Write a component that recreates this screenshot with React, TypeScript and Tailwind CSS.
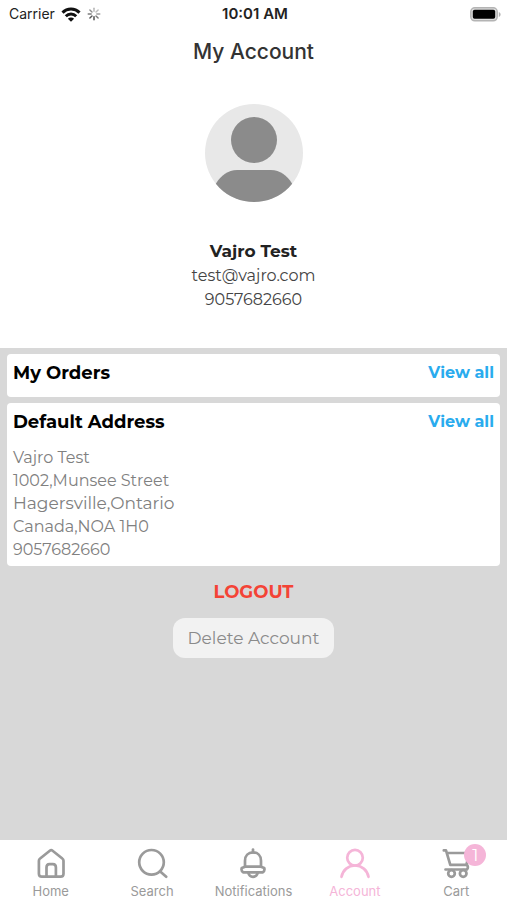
import type { ReactNode } from "react";

function WifiIcon() {
  return (
    <svg viewBox="0 0 20 15" className="h-[15px] w-5" fill="none" stroke="#111" strokeWidth="3" aria-hidden="true">
      <path d="M1.500 5.600a12 12 0 0 1 17 0" />
      <path d="M4.800 9.200a7.400 7.400 0 0 1 10.400 0" />
      <path d="M10 14.800 6.900 11.700a4.400 4.400 0 0 1 6.200 0Z" fill="#111" stroke="none" />
    </svg>
  );
}

function SpinnerIcon() {
  return (
    <svg viewBox="0 0 14 14" className="size-3.5" stroke="#444" strokeWidth="1.400" strokeLinecap="round" aria-hidden="true">
      <path d="M7 1.200v3" opacity=".4" />
      <path d="m11.100 2.900-2.100 2.100" opacity=".35" />
      <path d="M12.800 7h-3" opacity=".5" />
      <path d="m11.100 11.100-2.100-2.100" opacity=".7" />
      <path d="M7 12.800v-3" />
      <path d="m2.900 11.100 2.100-2.100" opacity=".9" />
      <path d="M1.200 7h3" opacity=".7" />
      <path d="m2.900 2.900 2.100 2.100" opacity=".6" />
    </svg>
  );
}

function BatteryIcon() {
  return (
    <svg viewBox="0 0 31 15" className="h-[15px] w-[31px]" aria-hidden="true">
      <rect x=".8" y=".8" width="26.400" height="13" rx="4" fill="#ddd" stroke="#b4b4b4" strokeWidth="1.500" />
      <rect x="2.800" y="2.800" width="22.400" height="9" rx="1.800" fill="#000" />
      <path d="M28.800 5v5c1.100-.4 1.800-1.400 1.800-2.500S29.900 5.400 28.800 5Z" fill="#b4b4b4" />
    </svg>
  );
}

function Avatar() {
  return (
    <svg viewBox="0 0 98 98" className="size-[98px]" role="img" aria-label="Profile picture">
      <defs>
        <clipPath id="avatar-disc">
          <circle cx="49" cy="49" r="49" />
        </clipPath>
      </defs>
      <circle cx="49" cy="49" r="49" fill="#e8e8e8" />
      <circle cx="49" cy="36" r="23" fill="#8b8b8b" />
      <path
        d="M32 66h34c9 0 16 5.500 21 13.500v20H11v-20c5-8 12-13.500 21-13.500Z"
        fill="#8b8b8b"
        clipPath="url(#avatar-disc)"
      />
    </svg>
  );
}

function Glyph({ children }: { children: ReactNode }) {
  return (
    <svg
      viewBox="0 0 32 32"
      className="size-8"
      fill="none"
      stroke="currentColor"
      strokeWidth="2.700"
      strokeLinecap="round"
      strokeLinejoin="round"
      aria-hidden="true"
    >
      {children}
    </svg>
  );
}

function HomeIcon() {
  return (
    <Glyph>
      <path d="M3.900 12.800c0-1 .4-1.700 1.200-2.300l9.700-7.800c.9-.7 1.900-.7 2.800 0l9.700 7.800c.8.6 1.200 1.300 1.200 2.300v12.900c0 1.900-1 2.900-2.900 2.900H6.800c-1.900 0-2.900-1-2.900-2.900Z" />
      <path d="M11.500 28.500V19.500c0-2.200 1-3.400 3-3.400h3.400c2 0 3 1.200 3 3.400v9" />
    </Glyph>
  );
}

function SearchIcon() {
  return (
    <Glyph>
      <circle cx="15.500" cy="14.300" r="12.300" />
      <path d="m24.200 23.400 6 5.300" />
    </Glyph>
  );
}

function BellIcon() {
  return (
    <Glyph>
      <path d="M16 1.500v3" />
      <path d="M8 18.700v-6c0-5 3.300-8.300 8-8.300s8 3.300 8 8.300v6" />
      <path d="M8 18.700h16l3.200 1.300c.6 1.800.1 3.400-1.500 4.400H6.300c-1.600-1-2.100-2.600-1.500-4.400Z" />
      <path d="M11.300 24.800c.6 2.600 2.200 4 4.700 4s4.100-1.400 4.700-4" />
    </Glyph>
  );
}

function AccountIcon() {
  return (
    <Glyph>
      <circle cx="16" cy="9.700" r="7.800" />
      <path d="M2.500 28.800C3.800 22 9.300 17.500 16 17.500s12.200 4.500 13.500 11.300" />
    </Glyph>
  );
}

function CartIcon() {
  return (
    <Glyph>
      <path d="M3.800 2.400H6l4.300 14.400h16.200L29 5H7" />
      <path d="M26.500 16.800c1.800 1 1.800 3.200.4 4.700H5.500" />
      <circle cx="11.500" cy="25.500" r="3.300" />
      <circle cx="23.200" cy="25.500" r="3.300" />
    </Glyph>
  );
}

const address = [
  { text: "Vajro Test" },
  { text: "1002,Munsee Street" },
  { text: "Hagersville,Ontario", large: true },
  { text: "Canada,NOA 1H0" },
  { text: "9057682660" },
];

const tabs = [
  { label: "Home", icon: <HomeIcon /> },
  { label: "Search", icon: <SearchIcon /> },
  { label: "Notifications", icon: <BellIcon /> },
  { label: "Account", icon: <AccountIcon />, active: true },
  { label: "Cart", icon: <CartIcon />, badge: 1 },
];

function Card({ title, children }: { title: string; children?: ReactNode }) {
  return (
    <section className="rounded bg-white px-1.5 pt-1.5">
      <div className="flex h-[37px] items-start justify-between">
        <h2 className="text-[18px] leading-[26px] font-bold text-black">{title}</h2>
        <a href="#" aria-label={`View all: ${title}`} className="text-[16px] leading-[26px] font-bold text-[#29abee]">
          View all
        </a>
      </div>
      {children}
    </section>
  );
}

export default function App() {
  return (
    <div className="flex min-h-screen flex-col bg-white font-['Montserrat','Inter',sans-serif]">
      <header className="font-['Inter',sans-serif]">
        <div className="grid h-7 grid-cols-3 items-center pr-1.5 pl-[9px] text-[14px] leading-5 text-[#222]">
          <div className="flex items-center gap-1.5">
            <span>Carrier</span>
            <WifiIcon />
            <SpinnerIcon />
          </div>
          <span className="text-center text-[15px] font-semibold">10:01 AM</span>
          <div className="flex justify-end">
            <BatteryIcon />
          </div>
        </div>
        <h1 className="pt-2 text-center text-[21px] leading-8 font-medium text-[#333]">My Account</h1>
      </header>

      <main className="flex flex-1 flex-col">
        <div className="flex flex-col items-center pt-9 pb-9 text-[16px] leading-6 text-[#444]">
          <Avatar />
          <p className="pt-[37px] text-[17px] leading-[25px] font-bold text-[#222]">Vajro Test</p>
          <p>test@vajro.com</p>
          <p>9057682660</p>
        </div>

        <div className="flex flex-1 flex-col gap-1.5 bg-[#d8d8d8] px-[7px] pt-1.5">
          <Card title="My Orders" />
          <Card title="Default Address">
            <address className="pb-[5px] text-[16px] leading-[23px] text-[#808080] not-italic">
              {address.map((line) => (
                <p key={line.text} className={line.large ? "text-[17px]" : undefined}>
                  {line.text}
                </p>
              ))}
            </address>
          </Card>
          <div className="flex flex-col items-center gap-3 pt-1.5">
            <button type="button" className="text-[18px] leading-7 font-bold text-[#f44336]">
              LOGOUT
            </button>
            <button
              type="button"
              className="h-10 rounded-xl bg-[#f2f2f2] px-[15px] text-[17px] leading-6 text-[#8a8a8a]"
            >
              Delete Account
            </button>
          </div>
        </div>
      </main>

      <nav className="grid h-[60px] grid-cols-5 bg-white pt-2 font-['Inter',sans-serif]">
        {tabs.map((tab) => (
          <a
            key={tab.label}
            href="#"
            aria-current={tab.active ? "page" : undefined}
            className={
              tab.active
                ? "flex flex-col items-center gap-[3px] text-[13px] leading-4 text-[#f5b5d8]"
                : "flex flex-col items-center gap-[3px] text-[13px] leading-4 text-[#9a9a9a]"
            }
          >
            <span className="relative">
              {tab.icon}
              {tab.badge && (
                <span className="absolute -top-1 -right-3.5 flex size-[22px] items-center justify-center rounded-full bg-[#f5b5d8] font-['Montserrat','Inter',sans-serif] text-[17px] text-white">
                  {tab.badge}
                </span>
              )}
            </span>
            <span>{tab.label}</span>
          </a>
        ))}
      </nav>
    </div>
  );
}
